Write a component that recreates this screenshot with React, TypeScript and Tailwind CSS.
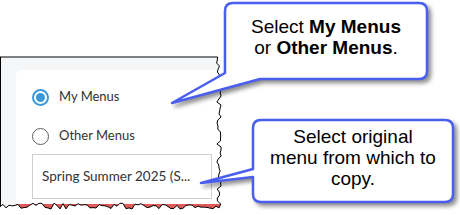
import React from 'react';

// seeded jitter so the torn edge is the same on every render
function jitter(seed: number) {
  const x = Math.sin(seed * 12.9898) * 43758.5453;
  return x - Math.floor(x);
}

function tornPath() {
  const pts: [number, number][] = [];
  for (let y = 57; y <= 204; y += 3) {
    pts.push([219 + (jitter(y) - 0.5) * 5, y]);
  }
  for (let x = 219; x >= 0; x -= 3) {
    pts.push([x, 206 + (jitter(x + 500) - 0.5) * 6]);
  }
  return pts;
}

function TornEdge() {
  const pts = tornPath();
  const line = pts.map((p, i) => `${i ? 'L' : 'M'}${p[0].toFixed(1)} ${p[1].toFixed(1)}`).join(' ');
  const fill = `M221 0 L221 57 L${line.slice(1)} L0 215 L460 215 L460 0 Z`;
  return (
    <svg className="absolute left-0 top-0" width="460" height="215" viewBox="0 0 460 215">
      <path d={`M0 57 L${pts[0][0].toFixed(1)} 57`} stroke="#000" strokeWidth="1" fill="none" />
      <path d={fill} fill="#fff" />
      <path d={line} stroke="#000" strokeWidth="1" fill="none" />
    </svg>
  );
}

function Radio({ checked }: { checked?: boolean }) {
  return checked ? (
    <span className="w-[17px] h-[17px] rounded-full border-2 border-[#3a9ad9] flex items-center justify-center shrink-0">
      <span className="w-[9px] h-[9px] rounded-full bg-[#3a9ad9]" />
    </span>
  ) : (
    <span className="w-[17px] h-[17px] rounded-full border-[1.5px] border-[#5f5f5f] shrink-0" />
  );
}

function Callout({ d }: { d: string }) {
  return (
    <svg
      className="absolute left-0 top-0 drop-shadow-[3px_3px_2px_rgba(0,0,0,0.45)]"
      width="460"
      height="215"
      viewBox="0 0 460 215"
    >
      <path d={d} fill="#fff" stroke="#4a5ff0" strokeWidth="2.5" strokeLinejoin="round" />
    </svg>
  );
}

export default function App() {
  return (
    <div className="relative w-[460px] h-[215px] bg-white overflow-hidden">
      {/* screenshot excerpt */}
      <div className="mt-[57px] w-[222px] h-[158px] border-l border-black bg-[#f5f6f8] pl-[15px] pt-[13px] overflow-hidden font-['Lato','Noto_Sans',sans-serif]">
        <div className="w-[240px] bg-white rounded-tl-[6px] pl-[16px] pt-[19px] flex flex-col">
          <div className="h-[16px] flex items-center gap-[10px]">
            <Radio checked />
            <span className="text-[13px] text-[#333]">My Menus</span>
          </div>
          <div className="h-[16px] mt-[23px] flex items-center gap-[10px]">
            <Radio />
            <span className="text-[13px] text-[#333]">Other Menus</span>
          </div>
          <div className="mt-[10px] w-[180px] h-[45px] border border-[#cfcfcf] flex items-center pl-[9px] text-[13.5px] text-[#333]">
            Spring Summer 2025 (S...
          </div>
          <div className="mt-[5px] -ml-[16px] h-[14px] bg-[#e05a5a]" />
        </div>
      </div>

      <TornEdge />

      {/* callout 1 */}
      <Callout d="M233 3 H419 Q427 3 427 11 V71 Q427 79 419 79 H260 L172 103 L225 73 V11 Q225 3 233 3 Z" />
      <div className="absolute left-[225px] top-[16px] w-[202px] text-center text-[19px] leading-[21px] text-black font-['Liberation_Sans',Arial,sans-serif]">
        Select <b>My Menus</b>
        <br />
        or <b>Other Menus</b>.
      </div>

      {/* callout 2 */}
      <Callout d="M261 120 H445 Q453 120 453 128 V194 Q453 202 445 202 H261 Q253 202 253 194 V177 L201 183 L253 169 V128 Q253 120 261 120 Z" />
      <div className="absolute left-[253px] top-[126px] w-[200px] text-center text-[19px] leading-[21px] text-black font-['Liberation_Sans',Arial,sans-serif]">
        Select original
        <br />
        menu from which to
        <br />
        copy.
      </div>
    </div>
  );
}
